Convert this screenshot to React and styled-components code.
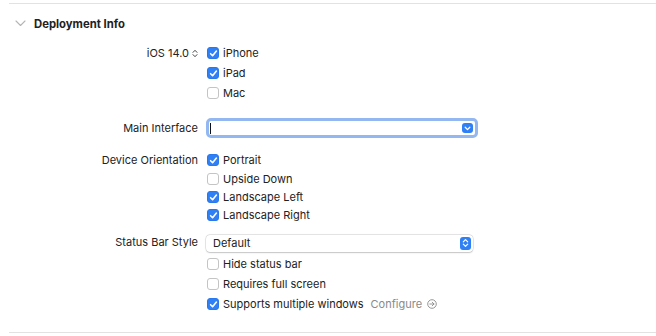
import React from "react";
import styled, { createGlobalStyle } from "styled-components";

const Global = createGlobalStyle`
  html, body { margin: 0; padding: 0; background: #ffffff; }
  body { font-family: Inter, "Liberation Sans", sans-serif; color: #262626; -webkit-font-smoothing: antialiased; }
`;

const Page = styled.div`
  width: 656px;
  height: 336px;
  padding-top: 3px;
  box-sizing: border-box;
  overflow: hidden;
`;

const Section = styled.section`
  margin-left: 9px;
  border-top: 1px solid #e2e2e2;
  border-bottom: 1px solid #e2e2e2;
  padding-bottom: 18px;
`;

const Header = styled.div`
  height: 36px;
  display: flex;
  align-items: center;
  gap: 8px;
  padding-left: 6px;
  padding-top: 3px;
  box-sizing: border-box;
`;

const Title = styled.h2`
  margin: 0;
  font-size: 11.3px;
  font-weight: 700;
  color: #222;
`;

const Form = styled.div`
  margin-top: 3px;
  display: grid;
  grid-template-columns: 189px 1fr;
  column-gap: 8px;
`;

const Label = styled.div`
  grid-column: 1;
  font-size: 11px;
  text-align: right;
  height: ${(p) => p.$h}px;
  line-height: ${(p) => p.$h}px;
  margin-top: ${(p) => p.$mt || 0}px;
  display: flex;
  justify-content: flex-end;
  align-items: center;
  gap: 3px;
  white-space: nowrap;
  color: #222;
`;

const Controls = styled.div`
  grid-column: 2;
  display: flex;
  flex-direction: column;
  margin-top: ${(p) => p.$mt || 0}px;
`;

const Line = styled.label`
  height: ${(p) => p.$h}px;
  display: flex;
  align-items: center;
  gap: 4px;
  font-size: 11px;
  color: #222;
  white-space: nowrap;
`;

const Box = styled.span`
  width: 12px;
  height: 12px;
  box-sizing: border-box;
  border-radius: 3px;
  display: inline-flex;
  align-items: center;
  justify-content: center;
  background: ${(p) => (p.$on ? "#2f7ff5" : "#ffffff")};
  border: 1px solid ${(p) => (p.$on ? "#2a78ee" : "#c4c4c4")};
  margin-left: 1px;
  flex: none;
`;

const Configure = styled.span`
  color: #8a8a8a;
  margin-left: 3px;
  display: inline-flex;
  align-items: center;
  gap: 5px;
`;

const FocusField = styled.div`
  width: 272px;
  height: 20px;
  box-sizing: border-box;
  border-radius: 5px;
  border: 3px solid #93b7f0;
  background: #fff;
  display: flex;
  align-items: center;
  justify-content: space-between;
  padding: 0 2px 0 1px;
`;

const Caret = styled.span`
  width: 1px;
  height: 11px;
  background: #111;
`;

const Popup = styled.div`
  width: 267px;
  height: 17px;
  box-sizing: border-box;
  border-radius: 4px;
  background: #fff;
  box-shadow: 0 0 0 0.5px rgba(0,0,0,0.16), 0 0.5px 1.5px rgba(0,0,0,0.16);
  display: flex;
  align-items: center;
  justify-content: space-between;
  padding: 0 2px 0 7px;
  font-size: 11px;
  color: #222;
`;

const BlueButton = styled.span`
  width: 11px;
  height: ${(p) => p.$h}px;
  border-radius: 3px;
  background: #2f7ff5;
  display: inline-flex;
  align-items: center;
  justify-content: center;
`;

const Check = ({ on }) => (
  <Box $on={on}>
    {on && (
      <svg width="9" height="9" viewBox="0 0 9 9">
        <path d="M1.6 4.7 L3.6 6.7 L7.4 2.1" fill="none" stroke="#fff" strokeWidth="1.6" strokeLinecap="round" strokeLinejoin="round" />
      </svg>
    )}
  </Box>
);

const Item = ({ on, h = 20, children }) => (
  <Line $h={h}>
    <Check on={on} />
    <span>{children}</span>
  </Line>
);

const Chevron = () => (
  <svg width="11" height="7" viewBox="0 0 11 7">
    <path d="M1 1 L5.5 5.5 L10 1" fill="none" stroke="#b5b5b5" strokeWidth="1.1" strokeLinecap="round" strokeLinejoin="round" />
  </svg>
);

const Stepper = () => (
  <svg width="6" height="9" viewBox="0 0 6 9">
    <path d="M1 3.4 L3 1.3 L5 3.4 M1 5.6 L3 7.7 L5 5.6" fill="none" stroke="#444" strokeWidth="1" strokeLinecap="round" strokeLinejoin="round" />
  </svg>
);

const DownIcon = () => (
  <svg width="7" height="5" viewBox="0 0 7 5">
    <path d="M1.2 1.3 L3.5 3.6 L5.8 1.3" fill="none" stroke="#fff" strokeWidth="1.3" strokeLinecap="round" strokeLinejoin="round" />
  </svg>
);

const UpDownIcon = () => (
  <svg width="7" height="10" viewBox="0 0 7 10">
    <path d="M1.3 3.8 L3.5 1.6 L5.7 3.8 M1.3 6.2 L3.5 8.4 L5.7 6.2" fill="none" stroke="#fff" strokeWidth="1.2" strokeLinecap="round" strokeLinejoin="round" />
  </svg>
);

const ArrowCircle = () => (
  <svg width="10" height="10" viewBox="0 0 10 10">
    <circle cx="5" cy="5" r="4.3" fill="none" stroke="#8a8a8a" strokeWidth="0.9" />
    <path d="M2.8 5 H7 M5.2 3.2 L7 5 L5.2 6.8" fill="none" stroke="#8a8a8a" strokeWidth="0.9" strokeLinecap="round" strokeLinejoin="round" />
  </svg>
);

export default function App() {
  return (
    <Page>
      <Global />
      <Section>
        <Header>
          <Chevron />
          <Title>Deployment Info</Title>
        </Header>
        <Form>
          <Label $h={20}>
            iOS 14.0 <Stepper />
          </Label>
          <Controls>
            <Item on>iPhone</Item>
            <Item on>iPad</Item>
            <Item>Mac</Item>
          </Controls>

          <Label $h={20} $mt={15}>Main Interface</Label>
          <Controls $mt={15}>
            <FocusField>
              <Caret />
              <BlueButton $h={10}>
                <DownIcon />
              </BlueButton>
            </FocusField>
          </Controls>

          <Label $h={18} $mt={13}>Device Orientation</Label>
          <Controls $mt={13}>
            <Item on h={18}>Portrait</Item>
            <Item h={19}>Upside Down</Item>
            <Item on h={18}>Landscape Left</Item>
            <Item on h={18}>Landscape Right</Item>
          </Controls>

          <Label $h={20} $mt={8}>Status Bar Style</Label>
          <Controls $mt={8}>
            <Line $h={22}>
              <Popup>
                <span>Default</span>
                <BlueButton $h={13}>
                  <UpDownIcon />
                </BlueButton>
              </Popup>
            </Line>
            <Item>Hide status bar</Item>
            <Item>Requires full screen</Item>
            <Line $h={20}>
              <Check on />
              <span>Supports multiple windows</span>
              <Configure>
                Configure <ArrowCircle />
              </Configure>
            </Line>
          </Controls>
        </Form>
      </Section>
    </Page>
  );
}
